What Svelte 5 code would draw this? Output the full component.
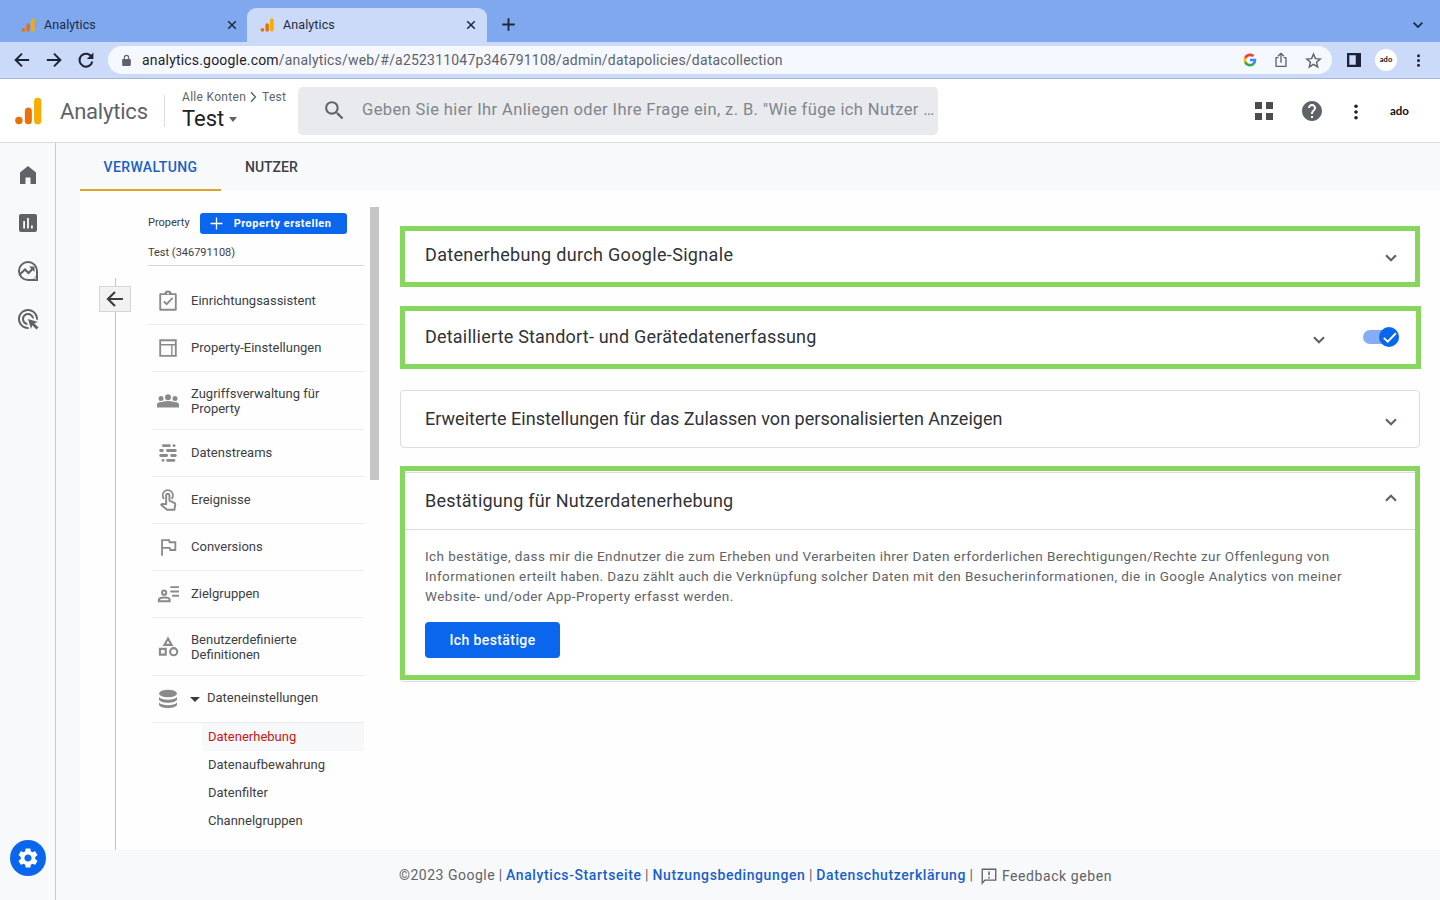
<script>
    let browserTabs = [
        {title: "Analytics", active: false},
        {title: "Analytics", active: true},
    ];

    let navItems = ["home", "reports", "explore", "ads"];

    let menuItems = [
        {label: "Einrichtungsassistent", icon: "clipboard"},
        {label: "Property-Einstellungen", icon: "layout"},
        {label: "Zugriffsverwaltung für Property", icon: "people", tall: true},
        {label: "Datenstreams", icon: "streams"},
        {label: "Ereignisse", icon: "touch"},
        {label: "Conversions", icon: "flag"},
        {label: "Zielgruppen", icon: "audience"},
        {label: "Benutzerdefinierte Definitionen", icon: "shapes", tall: true},
        {label: "Dateneinstellungen", icon: "database", open: true},
    ];

    let subItems = ["Datenerhebung", "Datenaufbewahrung", "Datenfilter", "Channelgruppen"];
    let selected = $state("Datenerhebung");

    let cards = $state([
        {title: "Datenerhebung durch Google-Signale", mark: "mark-a"},
        {title: "Detaillierte Standort- und Gerätedatenerfassung", mark: "mark-b", toggle: true},
        {title: "Erweiterte Einstellungen für das Zulassen von personalisierten Anzeigen"},
        {title: "Bestätigung für Nutzerdatenerhebung", mark: "mark-c", open: true},
    ]);

    let links = ["Analytics-Startseite", "Nutzungsbedingungen", "Datenschutzerklärung"];

    const icons = {
        logo: '<circle cx="4.2" cy="20.2" r="3.2" fill="#e8710a"/><rect x="9.3" y="9" width="6" height="14.4" rx="3" fill="#e8710a"/><rect x="17.2" y="0.6" width="6.2" height="22.8" rx="3.1" fill="#f9ab00"/>',
        close: '<path d="M5.500 5.500l13 13M18.500 5.500l-13 13" fill="none" stroke="currentColor" stroke-width="2.6"/>',
        plus: '<path d="M12 2v20M2 12h20" fill="none" stroke="currentColor" stroke-width="3"/>',
        thinplus: '<path d="M12 1v22M1 12h22" fill="none" stroke="currentColor" stroke-width="2.4"/>',
        chevron: '<path d="M4.500 8l7.500 7.500L19.500 8" fill="none" stroke="currentColor" stroke-width="3.200"/>',
        right: '<path d="M6 2.500l9 9.500-9 9.500" fill="none" stroke="currentColor" stroke-width="2.8"/>',
        back: '<path d="M21.5 12H4M12 3.5L3.5 12l8.5 8.5" fill="none" stroke="currentColor" stroke-width="2.6"/>',
        forward: '<path d="M2.5 12H20M12 3.5l8.5 8.5-8.5 8.5" fill="none" stroke="currentColor" stroke-width="2.6"/>',
        reload: '<path d="M19.6 8.2A8.6 8.6 0 1 0 20.4 14" fill="none" stroke="currentColor" stroke-width="2.7"/><path d="M21.8 2v8.6h-8.6z"/>',
        lock: '<path d="M18.5 9H17V6.500A5 5 0 0 0 7 6.500V9H5.500C4.700 9 4 9.700 4 10.500v10c0 .8.7 1.500 1.500 1.500h13c.8 0 1.500-.7 1.500-1.500v-10c0-.8-.7-1.500-1.500-1.500zM9 9V6.500a3 3 0 0 1 6 0V9z"/>',
        google: '<path fill="#4285f4" d="M22.56 12.25c0-.78-.07-1.530-.2-2.250H12v4.260h5.920c-.26 1.370-1.040 2.530-2.210 3.310v2.770h3.570c2.080-1.920 3.280-4.740 3.280-8.090z"/><path fill="#34a853" d="M12 23c2.970 0 5.460-.98 7.280-2.660l-3.570-2.770c-.98.66-2.230 1.060-3.710 1.060-2.860 0-5.290-1.930-6.160-4.530H2.180v2.840C3.990 20.530 7.700 23 12 23z"/><path fill="#fbbc05" d="M5.840 14.090c-.22-.66-.35-1.360-.35-2.090s.13-1.430.35-2.090V7.070H2.180C1.430 8.550 1 10.220 1 12s.43 3.450 1.180 4.930z"/><path fill="#ea4335" d="M12 5.380c1.620 0 3.060.56 4.210 1.640l3.150-3.150C17.450 2.090 14.970 1 12 1 7.700 1 3.990 3.470 2.180 7.070l3.660 2.840C6.710 7.310 9.140 5.380 12 5.380z"/>',
        share: '<path d="M8 8.500H4.500v13h15v-13H16M12 16V3M7.500 6.500L12 2l4.500 4.500" fill="none" stroke="currentColor" stroke-width="2" stroke-linejoin="round"/>',
        star: '<path d="M12 3l2.700 6.300 6.800.6-5.200 4.500 1.600 6.700L12 17.500l-5.900 3.600 1.600-6.700-5.200-4.500 6.800-.6z" fill="none" stroke="currentColor" stroke-width="2"/>',
        panel: '<path d="M0 0h24v24H0zM4 4v16h11V4z" fill-rule="evenodd"/>',
        dots: '<circle cx="12" cy="4.300" r="2.400"/><circle cx="12" cy="12" r="2.400"/><circle cx="12" cy="19.700" r="2.400"/>',
        search: '<path d="M15.500 14h-.79l-.28-.27A6.470 6.470 0 0 0 16 9.500 6.500 6.500 0 1 0 9.500 16c1.610 0 3.090-.59 4.230-1.570l.27.28v.79l5 4.990L20.490 19l-4.990-5zm-6 0C7.010 14 5 11.990 5 9.500S7.010 5 9.500 5 14 7.010 14 9.500 11.990 14 9.500 14z"/>',
        apps: '<path d="M3 3h7v7H3zM14 3h7v7h-7zM3 14h7v7H3zM14 14h7v7h-7z"/>',
        help: '<path d="M12 2C6.480 2 2 6.480 2 12s4.480 10 10 10 10-4.480 10-10S17.520 2 12 2zm1 17h-2v-2h2v2zm2.070-7.750l-.9.920C13.450 12.900 13 13.500 13 15h-2v-.5c0-1.100.45-2.100 1.170-2.830l1.240-1.260c.37-.36.59-.86.59-1.410 0-1.100-.9-2-2-2s-2 .9-2 2H8c0-2.210 1.790-4 4-4s4 1.790 4 4c0 .88-.36 1.680-.93 2.250z"/>',
        home: '<path d="M4 21V9.500l8-6.500 8 6.500V21h-5.500v-6.500h-5V21z"/>',
        reports: '<path d="M19 3H5c-1.100 0-2 .9-2 2v14c0 1.100.9 2 2 2h14c1.100 0 2-.9 2-2V5c0-1.100-.9-2-2-2zM9 17.500H7.200V10H9zm3.900 0h-1.800V7h1.800zm3.900 0H15v-3h1.800z"/>',
        explore: '<path d="M12 3a9 9 0 1 0 0 18h9v-9a9 9 0 0 0-9-9z" fill="none" stroke="currentColor" stroke-width="2"/><path d="M20.500 15.500V21H15c2.500-.8 4.500-2.800 5.500-5.500z"/><path d="M4 15.200l5-4.700 3.500 3.500L17 9.500" fill="none" stroke="currentColor" stroke-width="2.200"/><path d="M13 7.500h5.500V13z"/><circle cx="19.300" cy="19.300" r=".9" fill="#f8f9fb"/>',
        ads: '<path d="M11.710 17.990C8.530 17.840 6 15.220 6 12c0-3.310 2.690-6 6-6 3.220 0 5.840 2.530 5.990 5.710l-2.100-.63C15.480 9.310 13.890 8 12 8c-2.210 0-4 1.790-4 4 0 1.890 1.310 3.480 3.080 3.890l.63 2.100zM22 12c0 .3-.01.6-.04.9l-1.970-.59c.01-.1.01-.21.01-.31 0-4.420-3.580-8-8-8s-8 3.580-8 8 3.580 8 8 8c.1 0 .21 0 .31-.01l.59 1.970c-.3.03-.6.04-.9.04-5.520 0-10-4.480-10-10S6.480 2 12 2s10 4.480 10 10zm-3.770 4.260L22 15l-10-3 3 10 1.260-3.770 4.270 4.270 1.980-1.980z"/>',
        gear: '<path d="M19.140 12.940c.04-.3.06-.61.06-.94 0-.32-.02-.64-.07-.94l2.030-1.580c.18-.14.23-.41.12-.61l-1.920-3.320c-.12-.22-.37-.29-.59-.22l-2.390.96c-.5-.38-1.030-.7-1.620-.94l-.36-2.540c-.04-.24-.24-.41-.48-.41h-3.840c-.24 0-.43.17-.47.41l-.36 2.540c-.59.24-1.130.57-1.620.94l-2.390-.96c-.22-.08-.47 0-.59.22L2.740 8.870c-.12.21-.08.47.12.61l2.030 1.580c-.05.3-.09.63-.09.94s.02.64.07.94l-2.030 1.580c-.18.14-.23.41-.12.61l1.920 3.320c.12.22.37.29.59.22l2.390-.96c.5.38 1.030.7 1.620.94l.36 2.540c.05.24.24.41.48.41h3.840c.24 0 .44-.17.47-.41l.36-2.540c.59-.24 1.130-.56 1.620-.94l2.390.96c.22.08.47 0 .59-.22l1.920-3.320c.12-.22.07-.47-.12-.61zM12 15.600c-1.980 0-3.600-1.620-3.600-3.600s1.620-3.600 3.600-3.600 3.600 1.620 3.600 3.600-1.620 3.600-3.600 3.600z"/>',
        clipboard: '<path d="M3.500 4.500h17v17h-17z" fill="none" stroke="currentColor" stroke-width="2" stroke-linejoin="round"/><path d="M8 4.500a4 4 0 0 1 8 0z"/><circle cx="12" cy="3.800" r="1" fill="#fff"/><path d="M7.500 12.500l3 3 6.500-7" fill="none" stroke="currentColor" stroke-width="2"/>',
        layout: '<path d="M3.500 3.500h17v17h-17z" fill="none" stroke="currentColor" stroke-width="2"/><path d="M4 8.400h16M16.200 8v12" fill="none" stroke="currentColor" stroke-width="1.500"/>',
        people: '<circle cx="5" cy="9.400" r="2.500"/><circle cx="12" cy="8.300" r="3"/><circle cx="19" cy="9.400" r="2.500"/><path d="M1 18.500v-2.800c0-2 2.300-2.900 5-2.700 1.700-.6 3.800-.9 6-.9s4.300.3 6 .9c2.700-.2 5 .7 5 2.700v2.800z"/>',
        streams: '<path d="M7 4h6.500M18.500 4h.2M4 9.300h1.800M11.500 9.300h8.500M4 14.700h6.500M16 14.700h4M6.500 20h.2M11.500 20h7" fill="none" stroke="currentColor" stroke-width="3.100" stroke-linecap="round"/>',
        touch: '<path d="M7.800 10.800a5.600 5.600 0 1 1 8 0" fill="none" stroke="currentColor" stroke-width="1.900"/><path d="M10 16.500V7a1.800 1.800 0 0 1 3.600 0v5.600l5.300 2.500c.8.400 1.100.9 1 1.700l-.9 5.900h-8L4.500 17.200l1-1z" fill="none" stroke="currentColor" stroke-width="2.100" stroke-linejoin="round"/>',
        flag: '<path d="M5.500 21.500V4.500h7.700l.5 2.300H20v8.500h-5.600l-.6-2.400H6" fill="none" stroke="currentColor" stroke-width="2"/>',
        audience: '<path d="M14.500 4.500H24M14.500 9.200H24M16.500 14H24" fill="none" stroke="currentColor" stroke-width="2.100"/><circle cx="7.800" cy="10.500" r="2.300" fill="none" stroke="currentColor" stroke-width="2.100"/><path d="M2 19.800v-1.400c0-1.800 3-2.700 5.900-2.700s5.900.9 5.900 2.700v1.400z" fill="none" stroke="currentColor" stroke-width="2.200"/>',
        shapes: '<path d="M12 2.800l3.900 6.900H8.100zM3.200 14h6.300v6.300H3.200z" fill="none" stroke="currentColor" stroke-width="2.300"/><circle cx="18.200" cy="17.100" r="3.900" fill="none" stroke="currentColor" stroke-width="2.300"/>',
        database: '<ellipse cx="12" cy="6" rx="9.800" ry="4.200"/><path d="M2.200 9.800c1.500 2.100 5.500 3 9.800 3s8.300-.9 9.800-3v2.400c0 2.400-4.400 3.900-9.800 3.900s-9.800-1.500-9.800-3.900zM2.200 15.900c1.500 2.100 5.500 3 9.800 3s8.300-.9 9.800-3v2c0 2.400-4.400 3.900-9.800 3.900s-9.800-1.500-9.800-3.900z"/>',
        feedback: '<path d="M3 21.500V3h18v14.500H6.500z" fill="none" stroke="currentColor" stroke-width="1.800"/><path d="M12 6v5M12 13v2.200" fill="none" stroke="currentColor" stroke-width="2"/>',
        check: '<path d="M4 12.500l5.500 5.500L21 6" fill="none" stroke="currentColor" stroke-width="2.600"/>',
    };
</script>

{#snippet icon(name, size)}
    <svg width={size} height={size} viewBox="0 0 24 24" fill="currentColor" aria-hidden="true">{@html icons[name]}</svg>
{/snippet}

<div class="window">
    <div class="tabstrip">
        {#each browserTabs as tab}
            <div class="tab" class:active={tab.active}>
                {@render icon("logo", 14)}
                <span>{tab.title}</span>
                {@render icon("close", 14)}
            </div>
        {/each}
        <div class="newtab">{@render icon("plus", 15)}</div>
        <div class="tabsearch">{@render icon("chevron", 14)}</div>
    </div>

    <div class="toolbar">
        <div class="history">
            {@render icon("back", 18)}
            {@render icon("forward", 18)}
            {@render icon("reload", 18)}
        </div>
        <div class="omnibox">
            <span class="lock">{@render icon("lock", 13)}</span>
            <span class="url"><b>analytics.google.com</b>/analytics/web/#/a252311047p346791108/admin/datapolicies/datacollection</span>
            <div class="boxicons">
                {@render icon("google", 14)}
                {@render icon("share", 16)}
                {@render icon("star", 17)}
            </div>
        </div>
        <div class="chrome">
            {@render icon("panel", 14)}
            <div class="avatar">ado</div>
            {@render icon("dots", 15)}
        </div>
    </div>

    <header>
        <span class="logo">{@render icon("logo", 28)}</span>
        <span class="brand">Analytics</span>
        <div class="account">
            <div class="crumbs">Alle Konten {@render icon("right", 12)} Test</div>
            <div class="current">Test <i></i></div>
        </div>
        <div class="search">
            {@render icon("search", 25)}
            <span>Geben Sie hier Ihr Anliegen oder Ihre Frage ein, z. B. "Wie füge ich Nutzer …</span>
        </div>
        <div class="actions">
            <span class="apps">{@render icon("apps", 24)}</span>
            <span class="help">{@render icon("help", 24)}</span>
            <span class="more">{@render icon("dots", 18)}</span>
            <span class="ado">ado</span>
        </div>
    </header>

    <div class="app">
        <nav>
            {#each navItems as item}
                <button>{@render icon(item, 24)}</button>
            {/each}
            <button class="admin">{@render icon("gear", 24)}</button>
        </nav>

        <div class="page">
            <div class="tabs">
                <button class="current-tab">VERWALTUNG</button>
                <button>NUTZER</button>
            </div>

            <div class="panel">
                <div class="rail">
                    <button>{@render icon("back", 20)}</button>
                </div>

                <aside>
                    <div class="prop">
                        <span>Property</span>
                        <button>{@render icon("thinplus", 13)}<span>Property erstellen</span></button>
                    </div>
                    <div class="propname">Test (346791108)</div>
                    <ul class="menu">
                        {#each menuItems as item}
                            <li class:tall={item.tall}>
                                <span class="ico">{@render icon(item.icon, item.icon === "people" ? 24 : 22)}</span>
                                {#if item.open}<i class="caret"></i>{/if}
                                <span class="label">{item.label}</span>
                            </li>
                        {/each}
                    </ul>
                    <ul class="sub">
                        {#each subItems as item}
                            <li class:selected={item === selected}><button onclick={() => selected = item}>{item}</button></li>
                        {/each}
                    </ul>
                </aside>
                <div class="scroll"></div>

                <main>
                    {#each cards as card}
                        <section class={["card", card.mark]}>
                            <div class="head">
                                <h2>{card.title}</h2>
                                <span class="arrow" class:up={card.open}>{@render icon("chevron", 16)}</span>
                                {#if card.toggle}
                                    <span class="toggle"><span class="knob">{@render icon("check", 17)}</span></span>
                                {/if}
                            </div>
                            {#if card.open}
                                <div class="body">
                                    <p>
                                        Ich bestätige, dass mir die Endnutzer die zum Erheben und Verarbeiten ihrer Daten erforderlichen Berechtigungen/Rechte zur Offenlegung von<br>
                                        Informationen erteilt haben. Dazu zählt auch die Verknüpfung solcher Daten mit den Besucherinformationen, die in Google Analytics von meiner<br>
                                        Website- und/oder App-Property erfasst werden.
                                    </p>
                                    <button>Ich bestätige</button>
                                </div>
                            {/if}
                        </section>
                    {/each}
                </main>
            </div>

            <footer>
                <span>©2023 Google</span>
                {#each links as link}
                    <span class="bar">|</span><a href="#top">{link}</a>
                {/each}
                <span class="bar">|</span>
                <span class="feedback">{@render icon("feedback", 18)}Feedback geben</span>
            </footer>
        </div>
    </div>
</div>

<style>
    :global(body) {
        overflow: hidden;
    }
    .window {
        display: flex;
        flex-direction: column;
        width: 1440px;
        height: 900px;
        background: #f8f9fb;
        font-family: Roboto, sans-serif;
        color: #3c4043;
    }
    .window :global(svg) {
        display: block;
        flex: none;
    }
    button {
        font: inherit;
        color: inherit;
        letter-spacing: inherit;
        border: 0;
        padding: 0;
        background: none;
    }
    ul, h2, p {
        margin: 0;
        padding: 0;
        list-style: none;
    }

    /* browser */
    .tabstrip {
        display: flex;
        height: 42px;
        padding: 8px 15px 0 8px;
        box-sizing: border-box;
        background: #7fa8ee;
        color: #1b2a41;
    }
    .tab {
        display: flex;
        align-items: center;
        width: 240px;
        height: 34px;
        padding: 0 9px 0 13px;
        box-sizing: border-box;
        border-radius: 9px 9px 0 0;
        font-size: 12.5px;
        letter-spacing: 0.1px;
    }
    .tab:first-child {
        width: 239px;
        padding-right: 8px;
    }
    .tab.active {
        background: #cbdaf8;
    }
    .tab span {
        flex: 1;
        margin-left: 9px;
        padding-bottom: 2px;
    }
    .newtab {
        margin: 9px auto 0 14px;
    }
    .tabsearch {
        margin-top: 10px;
    }
    .toolbar {
        display: flex;
        align-items: center;
        height: 37px;
        box-sizing: border-box;
        border-bottom: 1px solid #a5b6d6;
        background: #cbdaf8;
        color: #1b2436;
    }
    .history {
        display: flex;
        gap: 14px;
        width: 95px;
        padding-left: 13px;
    }
    .omnibox {
        display: flex;
        align-items: center;
        width: 1224px;
        height: 28px;
        box-sizing: border-box;
        padding: 0 10px 0 12px;
        border-radius: 14px;
        background: #f5f8fe;
        color: #5f6368;
    }
    .url {
        margin-left: 9px;
        font-size: 14px;
        letter-spacing: 0.19px;
        flex: 1;
    }
    .url b {
        font-weight: 400;
        color: #1f2329;
    }
    .boxicons {
        display: flex;
        align-items: center;
        gap: 16px;
    }
    .chrome {
        display: flex;
        align-items: center;
        gap: 14px;
        margin-left: 15px;
    }
    .avatar {
        width: 22px;
        height: 22px;
        border-radius: 50%;
        background: #fff;
        text-align: center;
        font: 700 7.5px/21px Lato, sans-serif;
        color: #111;
    }

    /* app bar */
    header {
        display: flex;
        align-items: center;
        height: 64px;
        box-sizing: border-box;
        border-bottom: 1px solid #dadce0;
        background: #fff;
    }
    .logo {
        margin: 0 18px 0 14px;
    }
    .brand {
        width: 104px;
        padding-top: 2px;
        font-size: 22px;
        letter-spacing: -0.2px;
        color: #5f6368;
    }
    .account {
        width: 134px;
        height: 32px;
        border-left: 1px solid #dadce0;
        box-sizing: border-box;
        padding: 2px 0 0 17px;
        display: flex;
        flex-direction: column;
        justify-content: center;
    }
    .crumbs {
        display: flex;
        align-items: center;
        gap: 2px;
        font-size: 12px;
        letter-spacing: 0.3px;
        color: #5f6368;
        white-space: nowrap;
    }
    .current {
        display: flex;
        align-items: center;
        gap: 5px;
        font-size: 22px;
        line-height: 28px;
        padding-top: 1px;
        color: #202124;
    }
    .current i {
        border: 4.5px solid transparent;
        border-top: 5px solid #5f6368;
        border-bottom: 0;
    }
    .search {
        display: flex;
        align-items: center;
        width: 640px;
        height: 48px;
        box-sizing: border-box;
        padding-left: 24px;
        border-radius: 5px;
        background: #e8eaed;
        color: #5f6368;
    }
    .search span {
        margin-left: 15px;
        padding-bottom: 2px;
        font-size: 16.5px;
        letter-spacing: 0.39px;
        color: #80868b;
        white-space: nowrap;
    }
    .actions {
        display: flex;
        align-items: center;
        margin-left: 314px;
        color: #4a4c50;
    }
    .help {
        margin-left: 24px;
        color: #5f6368;
    }
    .more {
        margin: 2px 25px 0 23px;
        color: #202124;
    }
    .ado {
        font: 700 11.5px Lato, sans-serif;
        color: #111;
    }

    /* left navigation */
    .app {
        display: flex;
        flex: 1;
        min-height: 0;
    }
    nav {
        display: flex;
        flex-direction: column;
        align-items: center;
        gap: 24px;
        width: 56px;
        box-sizing: border-box;
        padding: 20px 0 24px;
        border-right: 1px solid #c9cbce;
        color: #5f6368;
    }
    .admin {
        display: grid;
        place-items: center;
        width: 36px;
        height: 36px;
        margin-top: auto;
        border-radius: 50%;
        background: #0b66ee;
        color: #fff;
    }
    .page {
        display: flex;
        flex-direction: column;
        flex: 1;
        padding-left: 24px;
    }
    .tabs {
        display: flex;
        height: 48px;
        font-size: 14px;
        font-weight: 500;
    }
    .tabs button {
        padding: 0 24px;
    }
    .tabs .current-tab {
        width: 141px;
        color: #1a5fc9;
        border-bottom: 2px solid #dba427;
        padding: 2px 0 0;
        letter-spacing: 0.4px;
    }
    .panel {
        display: flex;
        height: 659px;
        background: #fefefe;
    }
    .rail {
        width: 68px;
        box-sizing: border-box;
        padding: 95px 0 0 19px;
        background: linear-gradient(#c6c6c6, #c6c6c6) 35px 87px / 1px 100% no-repeat;
    }
    .rail button {
        display: grid;
        place-items: center;
        width: 32px;
        height: 26px;
        border: 1px solid #d5d5d5;
        background: #f2f2f2;
        color: #3c3c3c;
    }

    /* property menu */
    aside {
        width: 216px;
        font-size: 13px;
    }
    .prop {
        display: flex;
        align-items: center;
        gap: 10px;
        height: 21px;
        margin-top: 22px;
        font-size: 11px;
    }
    .prop > span {
        padding-bottom: 2px;
    }
    .prop button {
        display: flex;
        align-items: center;
        gap: 11px;
        width: 147px;
        height: 21px;
        padding-left: 10px;
        border-radius: 3px;
        background: #0b66ee;
        color: #fff;
        font-weight: 700;
        letter-spacing: 0.5px;
        white-space: nowrap;
    }
    .propname {
        height: 31px;
        font-size: 11px;
        line-height: 38px;
        border-bottom: 1px solid #d5d7d9;
    }
    .menu {
        margin-top: 12px;
    }
    .menu li {
        display: flex;
        align-items: center;
        height: 47px;
        box-sizing: border-box;
        border-bottom: 1px solid #ebecee;
        margin-left: 4px;
        padding-left: 4px;
    }
    .menu li:first-child {
        margin-left: 0;
        padding-left: 8px;
    }
    .menu .tall {
        height: 58px;
    }
    .ico {
        display: grid;
        place-items: center;
        width: 24px;
        color: #8a8a8a;
    }
    .label {
        margin-left: 11px;
        width: 140px;
        padding-bottom: 2px;
        line-height: 15px;
    }
    .tall .label {
        padding-bottom: 0;
    }
    .caret {
        margin-left: 10px;
        border: 5px solid transparent;
        border-top-color: #3c3c3c;
        border-bottom: 0;
    }
    .caret + .label {
        margin-left: 7px;
        padding-bottom: 4px;
    }
    .sub {
        margin: 0 0 0 54px;
    }
    .sub li {
        height: 28px;
        padding-left: 6px;
        line-height: 28px;
    }
    .sub .selected {
        background: #f7f8fa;
        color: #c5160f;
    }
    .scroll {
        width: 9px;
        height: 273px;
        margin: 16px 21px 0 6px;
        background: #c6c6c6;
    }

    /* settings cards */
    main {
        display: flex;
        flex-direction: column;
        gap: 24px;
        flex: 1;
        padding: 35px 20px 0 0;
    }
    .card {
        position: relative;
        border: 1px solid #dadce0;
        border-radius: 4px;
        background: #fff;
    }
    .mark-a::after, .mark-b::after, .mark-c::after {
        content: "";
        position: absolute;
        border: 5px solid #86d75b;
        inset: -1px -1px -4px -1px;
    }
    .mark-b::after {
        inset: -3px -2px -4px -1px;
    }
    .mark-c::after {
        inset: -7px -1px 1px -1px;
    }
    .head {
        display: flex;
        align-items: center;
        height: 56px;
        padding: 0 20px 0 24px;
        color: #5f6368;
    }
    h2 {
        flex: 1;
        padding-bottom: 2px;
        font-size: 18px;
        font-weight: 400;
        letter-spacing: 0.02px;
        color: #303236;
    }
    .mark-a h2 {
        letter-spacing: 0.33px;
    }
    .mark-b h2 {
        letter-spacing: 0.2px;
    }
    .mark-c h2 {
        letter-spacing: 0.22px;
    }
    .arrow {
        margin-top: 5px;
    }
    .arrow.up {
        margin-top: -6px;
        transform: scaleY(-1);
    }
    .toggle {
        display: flex;
        justify-content: flex-end;
        align-items: center;
        width: 36px;
        height: 14px;
        margin-left: 36px;
        border-radius: 7px;
        background: #85adf6;
    }
    .knob {
        display: grid;
        place-items: center;
        width: 20px;
        height: 20px;
        border-radius: 50%;
        background: #0b66ee;
        color: #fff;
    }
    .body {
        height: 152px;
        box-sizing: border-box;
        padding: 16px 24px;
        border-top: 1px solid #dadce0;
    }
    .body p {
        font-size: 13.5px;
        line-height: 20px;
        letter-spacing: 0.425px;
        color: #5f6368;
        white-space: nowrap;
    }
    .body button {
        width: 135px;
        height: 36px;
        margin-top: 16px;
        border-radius: 4px;
        background: #0b66ee;
        color: #fff;
        font-size: 14px;
        font-weight: 500;
        letter-spacing: 0.4px;
    }

    footer {
        display: flex;
        align-items: center;
        height: 50px;
        padding-left: 319px;
        font-size: 14px;
        letter-spacing: 0.5px;
        color: #5f6368;
    }
    footer a {
        color: #1a5fc9;
        font-weight: 500;
        letter-spacing: 0.6px;
        text-decoration: none;
    }
    .bar {
        margin: 0 3.5px;
    }
    .feedback {
        display: flex;
        align-items: center;
        gap: 4px;
        margin-left: 3px;
        padding-top: 2px;
        letter-spacing: 0.58px;
    }
</style>
